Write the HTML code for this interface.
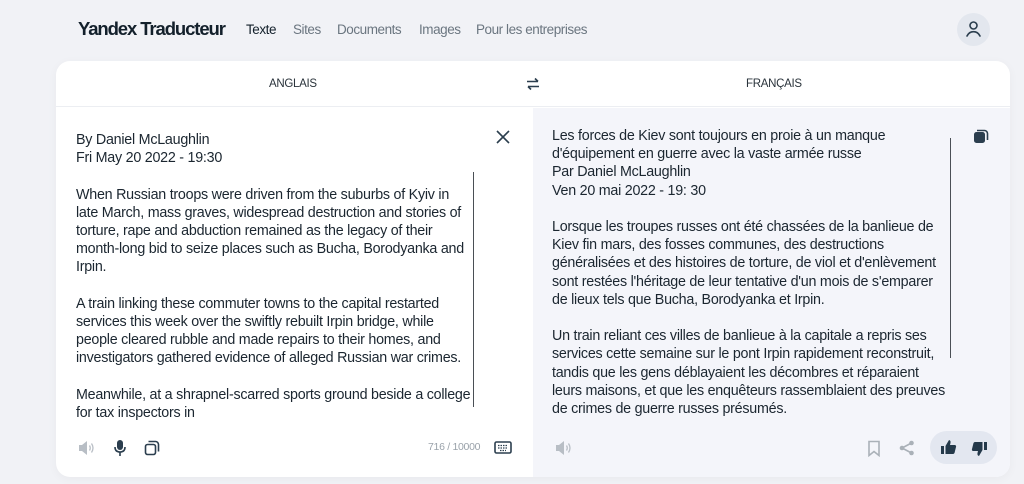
<!DOCTYPE html>
<html><head><meta charset="utf-8"><style>
*{margin:0;padding:0;box-sizing:border-box}
body{width:1024px;height:484px;background:#f1f2f6;font-family:"Liberation Sans",sans-serif;color:#1b2630;position:relative;overflow:hidden}
.logo{position:absolute;left:78px;top:18px;font-size:18.5px;font-weight:bold;letter-spacing:-1.1px;color:#13202b}
.nav{position:absolute;top:22px;font-size:13.5px;color:#6b7680;letter-spacing:-0.45px}
.avatar{position:absolute;left:957px;top:13px;width:33px;height:33px;border-radius:50%;background:#e3e7ee}
.card{position:absolute;left:56px;top:61px;width:954px;height:416px;background:#fff;border-radius:14px;overflow:hidden;box-shadow:0 2px 10px rgba(0,0,0,.04)}
.hdr{position:absolute;top:0;left:0;right:0;height:46px;border-bottom:1px solid #eceef2;font-size:11.5px;color:#2a333b;letter-spacing:-0.3px}
.right{position:absolute;left:477px;top:47px;right:0;bottom:0;background:#f4f5fa}
.txt{position:absolute;font-size:14.3px;line-height:18.2px;color:#1b2630;letter-spacing:-0.25px}
.bar{position:absolute;width:1px;background:#4a4f55}
svg{position:absolute}
</style></head><body>
<div class="logo">Yandex Traducteur</div>
<div class="nav" style="left:246px;color:#13202b">Texte</div>
<div class="nav" style="left:293px">Sites</div>
<div class="nav" style="left:337px">Documents</div>
<div class="nav" style="left:419px">Images</div>
<div class="nav" style="left:476px">Pour les entreprises</div>
<div class="avatar"><svg width="33" height="33" viewBox="0 0 33 33"><circle cx="16.5" cy="12.5" r="3.5" fill="none" stroke="#2b3e4e" stroke-width="1.6"/><path d="M10 23c1.5-3 4-4.3 6.5-4.3S21.5 20 23 23" fill="none" stroke="#2b3e4e" stroke-width="1.6" stroke-linecap="round"/></svg></div>
<div class="card">
 <div class="hdr"><span style="position:absolute;left:213px;top:17px">ANGLAIS</span><span style="position:absolute;left:690px;top:17px">FRANÇAIS</span>
 <svg style="left:470px;top:16px" width="14" height="14" viewBox="0 0 14 14"><path d="M1 4.5h11M9 1.5l3 3M13 9.5H2M5 12.5l-3-3" fill="none" stroke="#2b3e4e" stroke-width="1.6"/></svg></div>
 <div class="right"></div>
 <div class="txt" style="left:20px;top:70px">By Daniel McLaughlin<br>Fri May 20 2022 - 19:30<br><br>When Russian troops were driven from the suburbs of Kyiv in<br>late March, mass graves, widespread destruction and stories of<br>torture, rape and abduction remained as the legacy of their<br>month-long bid to seize places such as Bucha, Borodyanka and<br>Irpin.<br><br>A train linking these commuter towns to the capital restarted<br>services this week over the swiftly rebuilt Irpin bridge, while<br>people cleared rubble and made repairs to their homes, and<br>investigators gathered evidence of alleged Russian war crimes.<br><br>Meanwhile, at a shrapnel-scarred sports ground beside a college<br>for tax inspectors in</div>
 <div class="bar" style="left:417px;top:111px;height:235px"></div>
 <svg style="left:440px;top:69px" width="14" height="14" viewBox="0 0 14 14"><path d="M1 1l12 12M13 1L1 13" stroke="#2b3e4e" stroke-width="1.6"/></svg>
 <div class="txt" style="left:496px;top:66px">Les forces de Kiev sont toujours en proie à un manque<br>d'équipement en guerre avec la vaste armée russe<br>Par Daniel McLaughlin<br>Ven 20 mai 2022 - 19: 30<br><br>Lorsque les troupes russes ont été chassées de la banlieue de<br>Kiev fin mars, des fosses communes, des destructions<br>généralisées et des histoires de torture, de viol et d'enlèvement<br>sont restées l'héritage de leur tentative d'un mois de s'emparer<br>de lieux tels que Bucha, Borodyanka et Irpin.<br><br>Un train reliant ces villes de banlieue à la capitale a repris ses<br>services cette semaine sur le pont Irpin rapidement reconstruit,<br>tandis que les gens déblayaient les décombres et réparaient<br>leurs maisons, et que les enquêteurs rassemblaient des preuves<br>de crimes de guerre russes présumés.</div>
 <div class="bar" style="left:894px;top:77px;height:220px"></div>
 <svg style="left:917px;top:67px" width="16" height="16" viewBox="0 0 16 16"><rect x="1" y="4" width="11" height="11" rx="2.5" fill="#2b3e4e"/><path d="M4 2.5h7.5a3 3 0 0 1 3 3V12" fill="none" stroke="#2b3e4e" stroke-width="1.6"/></svg>
 <svg style="left:22px;top:379px" width="18" height="16" viewBox="0 0 18 16"><path d="M1 5h3l5-4v14l-5-4H1z" fill="#b8bec5"/><path d="M11.5 5.5q1.5 2.5 0 5M13.5 3.5q3 4.5 0 9" fill="none" stroke="#b8bec5" stroke-width="1.3"/></svg>
 <svg style="left:57px;top:378px" width="14" height="18" viewBox="0 0 14 18"><rect x="4" y="1" width="6" height="10" rx="3" fill="#2b3e4e"/><path d="M2 8q0 5 5 5t5-5M7 13v4" fill="none" stroke="#2b3e4e" stroke-width="1.6"/></svg>
 <svg style="left:88px;top:379px" width="16" height="16" viewBox="0 0 16 16"><rect x="1.5" y="4.5" width="10" height="10" rx="2" fill="none" stroke="#2b3e4e" stroke-width="1.6"/><path d="M4.5 1.5h7a3 3 0 0 1 3 3v7" fill="none" stroke="#2b3e4e" stroke-width="1.6"/></svg>
 <div style="position:absolute;left:372px;top:380px;font-size:10.5px;color:#9aa2aa;letter-spacing:-0.3px">716 / 10000</div>
 <svg style="left:438px;top:380px" width="18" height="13" viewBox="0 0 18 13"><rect x="1" y="1" width="16" height="11" rx="1.5" fill="none" stroke="#2b3e4e" stroke-width="1.6"/><path d="M4 4.5h10M4 7h10M6 9.5h6" stroke="#2b3e4e" stroke-width="1.3" stroke-dasharray="1.5 1"/></svg>
 <svg style="left:499px;top:379px" width="18" height="16" viewBox="0 0 18 16"><path d="M1 5h3l5-4v14l-5-4H1z" fill="#b8bec5"/><path d="M11.5 5.5q1.5 2.5 0 5M13.5 3.5q3 4.5 0 9" fill="none" stroke="#b8bec5" stroke-width="1.3"/></svg>
 <svg style="left:811px;top:379px" width="14" height="17" viewBox="0 0 14 17"><path d="M2 1.5h10v14l-5-4-5 4z" fill="none" stroke="#aab1b8" stroke-width="1.6"/></svg>
 <svg style="left:843px;top:379px" width="16" height="16" viewBox="0 0 16 16"><circle cx="12.5" cy="3" r="2.3" fill="#aab1b8"/><circle cx="3" cy="8" r="2.3" fill="#aab1b8"/><circle cx="12.5" cy="13" r="2.3" fill="#aab1b8"/><path d="M12.5 3L3 8l9.5 5" fill="none" stroke="#aab1b8" stroke-width="1.6"/></svg>
 <div style="position:absolute;left:874px;top:370px;width:67px;height:33px;border-radius:17px;background:#e3e7f0"></div>
 <svg style="left:884px;top:378px" width="17" height="16" viewBox="0 0 17 16"><rect x="1" y="7" width="3" height="8" fill="#24394a"/><path d="M5.5 7L9 1q2 .5 1.5 3L10 6h5q1.5 .5 1 2l-1.5 6q-.5 1-1.5 1H5.5z" fill="#24394a"/></svg>
 <svg style="left:915px;top:380px" width="17" height="16" viewBox="0 0 17 16"><g transform="rotate(180 8.5 8)"><rect x="1" y="7" width="3" height="8" fill="#24394a"/><path d="M5.5 7L9 1q2 .5 1.5 3L10 6h5q1.5 .5 1 2l-1.5 6q-.5 1-1.5 1H5.5z" fill="#24394a"/></g></svg>
</div>
</body></html>
